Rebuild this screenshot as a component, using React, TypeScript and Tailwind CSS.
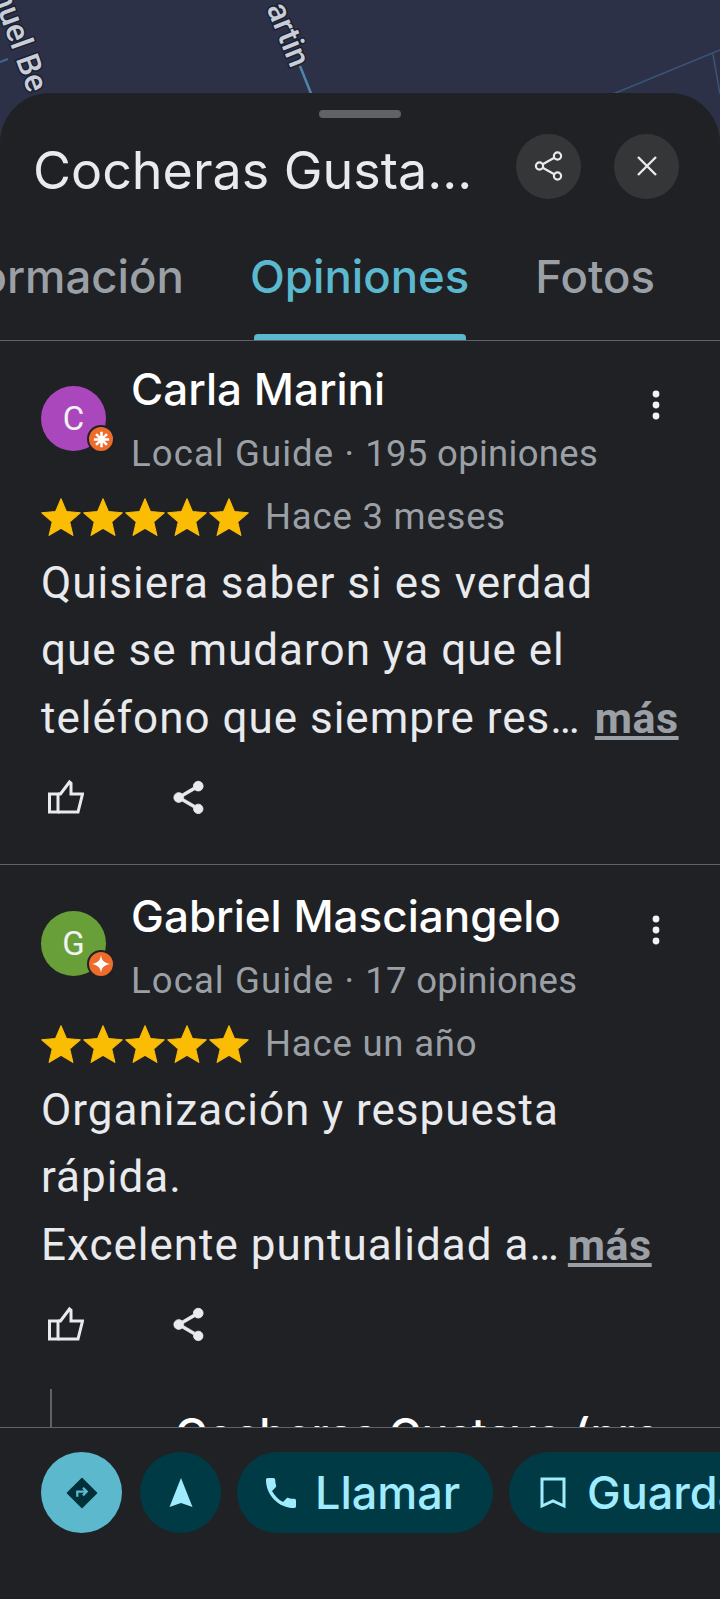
import React from "react";

const sans = "font-['Roboto',sans-serif]";
const display = "font-['Inter',sans-serif]";

function Star() {
  return (
    <svg viewBox="0 0 24 24" className="w-[42px] h-[42px] shrink-0 fill-[#fbbc04]" aria-hidden>
      <path d="M12 1.600l3.100 7.300 7.900.7-6 5.200 1.800 7.700L12 18.400l-6.800 4.100 1.800-7.700-6-5.200 7.900-.7z" stroke="#fbbc04" strokeWidth="0.600" strokeLinejoin="round" />
    </svg>
  );
}

function Thumb() {
  return (
    <svg viewBox="0 0 36 36" className="w-[36px] h-[36px]" fill="none" stroke="#e8eaed" strokeWidth="3" strokeLinejoin="miter" aria-hidden>
      <path d="M1.500 15h8.500v18H1.500z" />
      <path d="M10 15h2.500L21.500 3l1.500 1.200V15h11.500l-4.500 18H10" />
    </svg>
  );
}

function ShareFilled() {
  return (
    <svg viewBox="0 0 24 24" className="w-[39px] h-[39px] fill-[#e8eaed] stroke-[#e8eaed] stroke-[0.5px]" aria-hidden>
      <path d="M18 16.080c-.76 0-1.440.3-1.960.77L8.910 12.700c.05-.23.090-.46.090-.7s-.04-.47-.09-.7l7.050-4.110c.54.5 1.250.81 2.040.81 1.660 0 3-1.340 3-3s-1.340-3-3-3-3 1.340-3 3c0 .24.040.47.090.7L8.040 9.810C7.500 9.310 6.790 9 6 9c-1.660 0-3 1.340-3 3s1.340 3 3 3c.79 0 1.500-.31 2.040-.81l7.120 4.160c-.05.21-.08.43-.08.65 0 1.610 1.310 2.920 2.920 2.920s2.920-1.310 2.920-2.920-1.310-2.920-2.920-2.920z" />
    </svg>
  );
}

function Dots() {
  return (
    <svg viewBox="0 0 12 32" className="w-[12px] h-[32px] fill-[#f1f3f4]" aria-hidden>
      <circle cx="6" cy="5" r="3.400" />
      <circle cx="6" cy="16" r="3.400" />
      <circle cx="6" cy="27" r="3.400" />
    </svg>
  );
}

function Review({
  initial,
  color,
  name,
  count,
  time,
  lines,
  burst,
  first,
}: {
  initial: string;
  color: string;
  name: string;
  count: string;
  time: string;
  lines: React.ReactNode[];
  burst?: boolean;
  first?: boolean;
}) {
  return (
    <div className={`relative h-[524px] shrink-0 pl-[41px] pr-[42px] ${first ? "border-b border-[#5f6368]" : "pt-[3px]"}`}>
      <div className="flex items-start">
        <div className={`relative w-[65px] h-[65px] shrink-0 ${first ? "mt-[45px]" : "mt-[43px]"}`}>
          <div className={`w-[65px] h-[65px] rounded-full flex items-center justify-center text-[33px] text-[#f1f3f4] ${color}`}>
            {initial}
          </div>
          <div className="absolute left-[46px] top-[39px] w-[28px] h-[28px] rounded-full bg-[#ee6c2b] border-2 border-[#202124] flex items-center justify-center">
            {burst ? (
              <svg viewBox="0 0 20 20" className="w-[17px] h-[17px]" stroke="#fff" strokeWidth="3" aria-hidden>
                <path d="M10 1v18M1 10h18M3.600 3.600l12.800 12.800M16.400 3.600L3.600 16.400" />
              </svg>
            ) : (
              <svg viewBox="0 0 20 20" className="w-[18px] h-[18px] fill-white" aria-hidden>
                <path d="M10 0c.8 6 3.200 8.700 10 10-6.800 1.300-9.200 4-10 10-.8-6-3.200-8.700-10-10 6.800-1.300 9.200-4 10-10z" />
              </svg>
            )}
          </div>
        </div>
        <div className="ml-[25px] flex-1 min-w-0">
          <div className={`mt-[21px] h-[54px] flex items-center text-[44px] leading-[54px] font-medium text-white ${display}`}>{name}</div>
          <div className="mt-[14px] h-[48px] flex items-center text-[36.500px] text-[#9aa0a6] whitespace-pre">
            <span className="tracking-[1.1px]">Local Guide · </span>
            <span className="tracking-[0.3px]">{count}</span>
          </div>
        </div>
        <div className={`mr-[16px] shrink-0 ${first ? "mt-[48px]" : "mt-[46px]"}`}>
          <Dots />
        </div>
      </div>
      <div className="mt-[17px] h-[44px] flex items-center">
        <div className="flex -ml-[1px]">
          <Star />
          <Star />
          <Star />
          <Star />
          <Star />
        </div>
        <span className="ml-[15px] text-[36.500px] text-[#9aa0a6] tracking-[0.8px] whitespace-nowrap">{time}</span>
      </div>
      <div className="mt-[11px] text-[44px] leading-[67.300px] text-[#e8eaed] tracking-[1px] whitespace-nowrap">
        {lines.map((l, i) => (
          <div key={i} className="h-[67.300px]">{l}</div>
        ))}
      </div>
      <div className="mt-[26px] flex items-center">
        <div className="ml-[7px]"><Thumb /></div>
        <div className="ml-[85px]"><ShareFilled /></div>
      </div>
    </div>
  );
}

function More({ tight }: { tight?: boolean }) {
  return (
    <span className={`font-bold underline text-[#9aa0a6] text-[43px] tracking-[0.5px] ${tight ? "ml-[8px]" : "ml-[14px]"}`}>más</span>
  );
}

export default function App() {
  return (
    <div className={`relative w-[720px] h-[1599px] overflow-hidden bg-[#2c3148] flex flex-col ${sans}`}>
      <svg className="absolute left-0 top-0 w-[720px] h-[110px]" viewBox="0 0 720 110" fill="none" aria-hidden>
        <path d="M0 62 L8 59" stroke="#3d6a8e" strokeWidth="2" />
        <path d="M300 66 L312 96" stroke="#4d86a8" strokeWidth="2.500" />
        <path d="M613 94 L720 50 M713 54 L720 94" stroke="#3a5578" strokeWidth="1.500" />
        <text transform="translate(-8 -6) rotate(70)" fontSize="32" fontWeight="500" fill="#c8ced8" stroke="#1c2030" strokeWidth="3" paintOrder="stroke" fontFamily="Roboto, sans-serif">
          nuel Be
        </text>
        <text transform="translate(291 69) rotate(68)" fontSize="32" fontWeight="500" fill="#c8ced8" stroke="#1c2030" strokeWidth="3" paintOrder="stroke" fontFamily="Roboto, sans-serif" textAnchor="end">
          artin
        </text>
      </svg>

      <div className="relative mt-[93px] flex-1 min-h-0 rounded-t-[50px] bg-[#202124] flex flex-col overflow-hidden">
        <div className="mt-[17px] mx-auto w-[82px] h-[8px] rounded-full bg-[#5f6368]" />
        <div className="mt-[15px] h-[66px] flex items-center pl-[33px] pr-[41px]">
          <div className={`flex-1 min-w-0 text-[52px] text-[#e8eaed] whitespace-nowrap pt-[10px] ${display}`}>Cocheras Gusta...</div>
          <div className="w-[65px] h-[65px] rounded-full bg-[#353638] flex items-center justify-center">
            <svg viewBox="0 0 32 32" className="w-[32px] h-[32px]" fill="none" stroke="#e8eaed" strokeWidth="2.200" aria-hidden>
              <circle cx="24.500" cy="6" r="3.600" />
              <circle cx="6.500" cy="16" r="3.600" />
              <circle cx="24.500" cy="26" r="3.600" />
              <path d="M9.700 14.200L21.300 7.800M9.700 17.800L21.300 24.200" />
            </svg>
          </div>
          <div className="ml-[33px] w-[65px] h-[65px] rounded-full bg-[#353638] flex items-center justify-center">
            <svg viewBox="0 0 24 24" className="w-[24px] h-[24px]" fill="none" stroke="#e8eaed" strokeWidth="2.400" aria-hidden>
              <path d="M3 3l18 18M21 3L3 21" />
            </svg>
          </div>
        </div>
        <div className={`shrink-0 h-[141px] relative flex justify-end items-start pt-[53px] pr-[65px] gap-[66px] text-[45.500px] font-medium leading-[50px] text-[#9aa0a6] whitespace-nowrap overflow-hidden ${display}`}>
          <span>Información</span>
          <span className="text-[#5ab9cf]">Opiniones</span>
          <span>Fotos</span>
          <div className="absolute left-[254px] top-[135px] w-[212px] h-[6px] rounded-t-[4px] bg-[#5ab9cf]" />
        </div>
        <div className="border-t border-[#5f6368] flex-1 min-h-0 overflow-hidden">
          <Review
            first
            initial="C"
            color="bg-[#ab47bc]"
            name="Carla Marini"
            count="195 opiniones"
            time="Hace 3 meses"
            burst
            lines={[
              "Quisiera saber si es verdad",
              "que se mudaron ya que el",
              <span key="l" className="flex items-baseline">teléfono que siempre res…<More /></span>,
            ]}
          />
          <Review
            initial="G"
            color="bg-[#689f38]"
            name="Gabriel Masciangelo"
            count="17 opiniones"
            time="Hace un año"
            lines={[
              "Organización y respuesta",
              "rápida.",
              <span key="l" className="flex items-baseline">Excelente puntualidad a…<More tight /></span>,
            ]}
          />
          <div className="ml-[50px] w-[2px] h-[40px] bg-[#5f6368] relative overflow-visible">
            <div className={`absolute left-[125px] top-[20px] text-[44px] leading-[50px] font-medium text-white whitespace-nowrap ${display}`}>Cocheras Gustavo (pro</div>
          </div>
        </div>
        <div className="relative shrink-0 h-[172px] border-t border-[#5f6368] bg-[#202124] pt-[24px] pl-[41px] flex items-start gap-[16px] overflow-hidden">
          <div className="w-[81px] h-[81px] shrink-0 rounded-full bg-[#5cb9cd] mr-[2px] flex items-center justify-center">
            <svg viewBox="0 0 34 34" className="w-[32px] h-[32px]" aria-hidden>
              <path d="M17 1.500L32.500 17 17 32.500 1.500 17z" fill="#00303a" stroke="#00303a" strokeWidth="1.500" strokeLinejoin="round" />
              <path d="M12 21v-5.500h9M18 11.500l4 4-4 4" fill="none" stroke="#5cb9cd" strokeWidth="2.400" />
            </svg>
          </div>
          <div className="w-[81px] h-[81px] shrink-0 rounded-full bg-[#003a45] flex items-center justify-center">
            <svg viewBox="0 0 24 30" className="w-[24px] h-[30px] fill-[#a0ecff]" aria-hidden>
              <path d="M12 0l11.500 29L12 25 .500 29z" />
            </svg>
          </div>
          <div className="h-[81px] w-[256px] shrink-0 rounded-full bg-[#003a45] flex items-center pl-[24px] text-[#a0ecff]">
            <svg viewBox="0 0 24 24" className="w-[40px] h-[40px] fill-[#a0ecff]" aria-hidden>
              <path d="M6.620 10.790c1.440 2.830 3.760 5.140 6.590 6.590l2.200-2.200c.27-.27.670-.36 1.020-.24 1.120.37 2.330.57 3.570.57.550 0 1 .45 1 1V20c0 .55-.45 1-1 1-9.390 0-17-7.610-17-17 0-.55.450-1 1-1h3.500c.55 0 1 .45 1 1 0 1.250.2 2.450.57 3.570.110.350.030.740-.25 1.020l-2.200 2.200z" />
            </svg>
            <span className={`ml-[14px] text-[45px] font-medium ${display}`}>Llamar</span>
          </div>
          <div className="h-[81px] w-[300px] shrink-0 rounded-full bg-[#003a45] flex items-center pl-[31px] text-[#a0ecff]">
            <svg viewBox="0 0 26 32" className="w-[26px] h-[32px]" fill="none" stroke="#a0ecff" strokeWidth="3" aria-hidden>
              <path d="M2 2h22v27l-11-5-11 5z" />
            </svg>
            <span className={`ml-[21px] text-[45px] font-medium ${display}`}>Guardar</span>
          </div>
        </div>
      </div>
    </div>
  );
}
